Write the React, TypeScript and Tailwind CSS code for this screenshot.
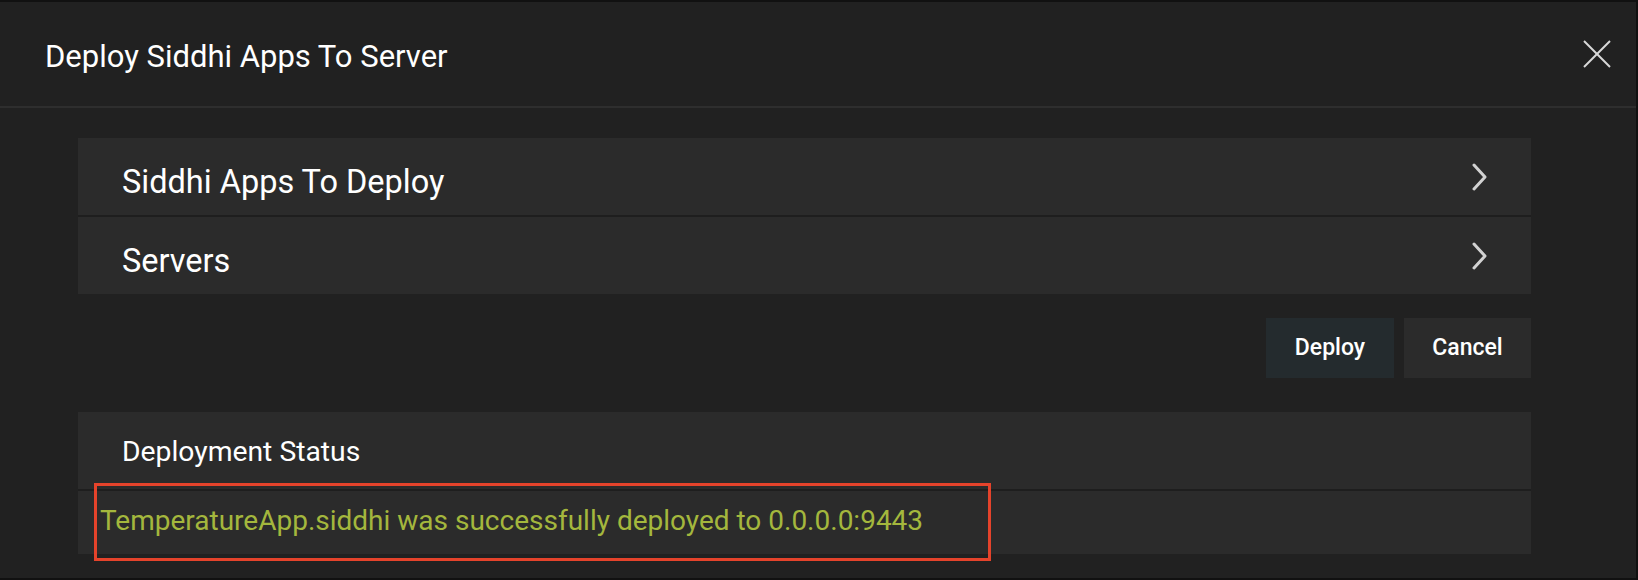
const font = { fontFamily: "Roboto, 'Liberation Sans', sans-serif" };

function Chevron() {
  return (
    <svg width="18" height="28" viewBox="0 0 18 28" className="text-[#d2d2d2]">
      <polyline points="3,2 14,14 3,26" fill="none" stroke="currentColor" strokeWidth="3" strokeLinecap="round" strokeLinejoin="round" />
    </svg>
  );
}

function PanelRow({ label }: { label: string }) {
  return (
    <div className="flex h-[77px] items-center justify-between bg-[#2b2b2b] pl-[44px] pr-[42px]">
      <span className="mt-[11px] text-[32.5px] leading-none text-white">{label}</span>
      <Chevron />
    </div>
  );
}

export default function App() {
  return (
    <div className="h-[580px] w-[1638px] bg-[#111111] pt-[2px]" style={font}>
      <div className="flex h-[576px] w-[1636px] flex-col bg-[#212121]">
        <div className="flex h-[106px] items-center justify-between border-b-2 border-[#2e2e2e] pl-[45px] pr-[25px]">
          <h1 className="mt-[5px] text-[31px] font-normal leading-none text-white">Deploy Siddhi Apps To Server</h1>
          <svg width="28" height="28" viewBox="0 0 28 28" className="text-[#d9d9d9]">
            <line x1="1" y1="1" x2="27" y2="27" stroke="currentColor" strokeWidth="2" />
            <line x1="27" y1="1" x2="1" y2="27" stroke="currentColor" strokeWidth="2" />
          </svg>
        </div>
        <div className="flex flex-col pl-[78px] pr-[105px] pt-[30px]">
          <div className="flex flex-col gap-[2px] bg-[#1e1e1e]">
            <PanelRow label="Siddhi Apps To Deploy" />
            <PanelRow label="Servers" />
          </div>
          <div className="mt-[24px] flex justify-end gap-[10px]">
            <button className="h-[60px] w-[128px] bg-[#242b2e] text-[23px] font-medium text-white">Deploy</button>
            <button className="h-[60px] w-[127px] bg-[#2b2b2b] text-[23px] font-medium text-white">Cancel</button>
          </div>
          <div className="mt-[34px] flex flex-col gap-[2px] bg-[#1e1e1e]">
            <div className="flex h-[77px] items-center bg-[#2b2b2b] pl-[44px]">
              <span className="mt-[4px] text-[28.3px] leading-none text-white">Deployment Status</span>
            </div>
            <div className="relative flex h-[63px] items-center bg-[#2b2b2b] pl-[22px]">
              <span className="mb-[4px] text-[28px] leading-none text-[#a4b73d]">
                TemperatureApp.siddhi was successfully deployed to 0.0.0.0:9443
              </span>
              <div className="absolute left-[16px] top-[-8px] h-[78px] w-[897px] border-[3px] border-[#e5432b]" />
            </div>
          </div>
        </div>
      </div>
    </div>
  );
}
